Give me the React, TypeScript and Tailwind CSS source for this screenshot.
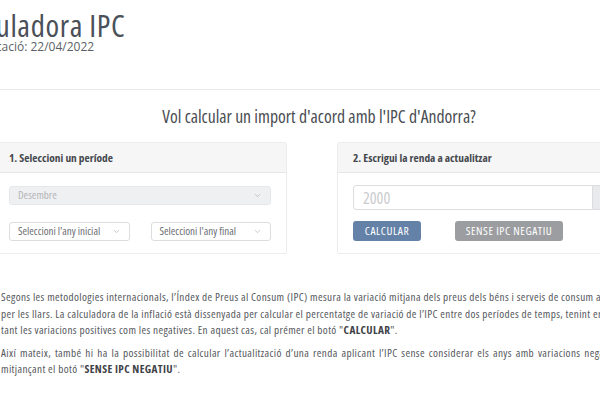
import React from 'react';
import { ChevronDown } from 'lucide-react';

const Select: React.FC<{ label: string; disabled?: boolean }> = ({ label, disabled }) => (
  <div
    className={
      'flex items-center justify-between h-[19px] px-[8px] rounded-[3px] border text-[11px] whitespace-nowrap ' +
      (disabled ? 'bg-[#eff0f2] border-[#e6e7e9] text-[#b3b5b8]' : 'bg-white border-[#dcdde0] text-[#6b6e73]')
    }
  >
    <span>{label}</span>
    <ChevronDown className="w-[9px] h-[9px] text-[#a4a6aa]" strokeWidth={1.5} />
  </div>
);

export default function App() {
  return (
    <div className="w-[600px] h-[400px] overflow-hidden bg-white font-['Open_Sans',sans-serif] [font-stretch:87.5%]">
      {/* capçalera */}
      <div className="pt-[11px] h-[89px]">
        <h1 className="ml-[-50px] text-[31px] leading-[28px] tracking-[0.6px] text-[#4b5059] whitespace-nowrap">Calculadora IPC</h1>
        <p className="ml-[-79px] text-[12px] leading-[16px] text-[#5b5f66] whitespace-nowrap [font-stretch:100%]">
          Data de publicació: 22/04/2022
        </p>
      </div>
      <div className="w-[600px] border-t border-[#e8e9eb]" />

      <h2 className="mt-[14px] text-center text-[17.7px] leading-[24px] text-[#4a4d52] pl-[38px] whitespace-nowrap">
        Vol calcular un import d'acord amb l'IPC d'Andorra?
      </h2>

      <div className="mt-[14px] ml-[-7px] flex gap-[50px] w-[700px]">
        {/* targeta 1 */}
        <div className="w-[294px] shrink-0 border border-[#ececee] rounded-[2px]">
          <div className="h-[30px] flex items-center px-[15px] bg-[#f6f6f7] border-b border-[#e6e6e8] text-[11.4px] font-bold text-[#45484d]">
            1. Seleccioni un període
          </div>
          <div className="px-[15px] pt-[13px] pb-[12px] flex flex-col gap-[17px]">
            <Select label="Desembre" disabled />
            <div className="grid grid-cols-2 gap-[21px]">
              <Select label="Seleccioni l'any inicial" />
              <Select label="Seleccioni l'any final" />
            </div>
          </div>
        </div>

        {/* targeta 2 */}
        <div className="w-[294px] shrink-0 border border-[#ececee] rounded-[2px]">
          <div className="h-[30px] flex items-center px-[15px] bg-[#f6f6f7] border-b border-[#e6e6e8] text-[11.4px] font-bold text-[#45484d]">
            2. Escrigui la renda a actualitzar
          </div>
          <div className="px-[15px] pt-[12px] pb-[12px] flex flex-col gap-[11px]">
            <div className="flex h-[25px]">
              <div className="flex-1 flex items-center pl-[9px] border border-[#dcdde0] rounded-l-[3px] text-[16px] text-[#c9cbce]">
                2000
              </div>
              <div className="w-[22px] bg-[#e9eaec] border border-l-0 border-[#dcdde0] rounded-r-[3px] flex items-center justify-center text-[12px] text-[#555]">
                €
              </div>
            </div>
            <div className="flex gap-[34px]">
              <button className="h-[20px] w-[68px] rounded-[3px] bg-[#6482a7] text-white text-[11.5px] tracking-[0.55px] uppercase">
                Calcular
              </button>
              <button className="h-[20px] w-[108px] rounded-[3px] bg-[#9b9da1] text-white text-[11.5px] tracking-[0.55px] uppercase">
                Sense IPC negatiu
              </button>
            </div>
          </div>
        </div>
      </div>

      {/* text explicatiu */}
      <div className="mt-[35px] pl-[1px] text-[11.2px] tracking-[0.37px] leading-[16.5px] text-[#55585d] whitespace-nowrap">
        <div>
          Segons les metodologies internacionals, l’Índex de Preus al Consum (IPC) mesura la variació mitjana dels preus dels béns i serveis de consum adquirits
        </div>
        <div>
          per les llars. La calculadora de la inflació està dissenyada per calcular el percentatge de variació de l’IPC entre dos períodes de temps, tenint en compte
        </div>
        <div>
          tant les variacions positives com les negatives. En aquest cas, cal prémer el botó "<b className="text-[#3f4247]">CALCULAR</b>".
        </div>
        <div className="mt-[6px] [word-spacing:1.4px]">
          Així mateix, també hi ha la possibilitat de calcular l’actualització d’una renda aplicant l’IPC sense considerar els anys amb variacions negatives
        </div>
        <div>
          mitjançant el botó "<b className="text-[#3f4247]">SENSE IPC NEGATIU</b>".
        </div>
      </div>
    </div>
  );
}
